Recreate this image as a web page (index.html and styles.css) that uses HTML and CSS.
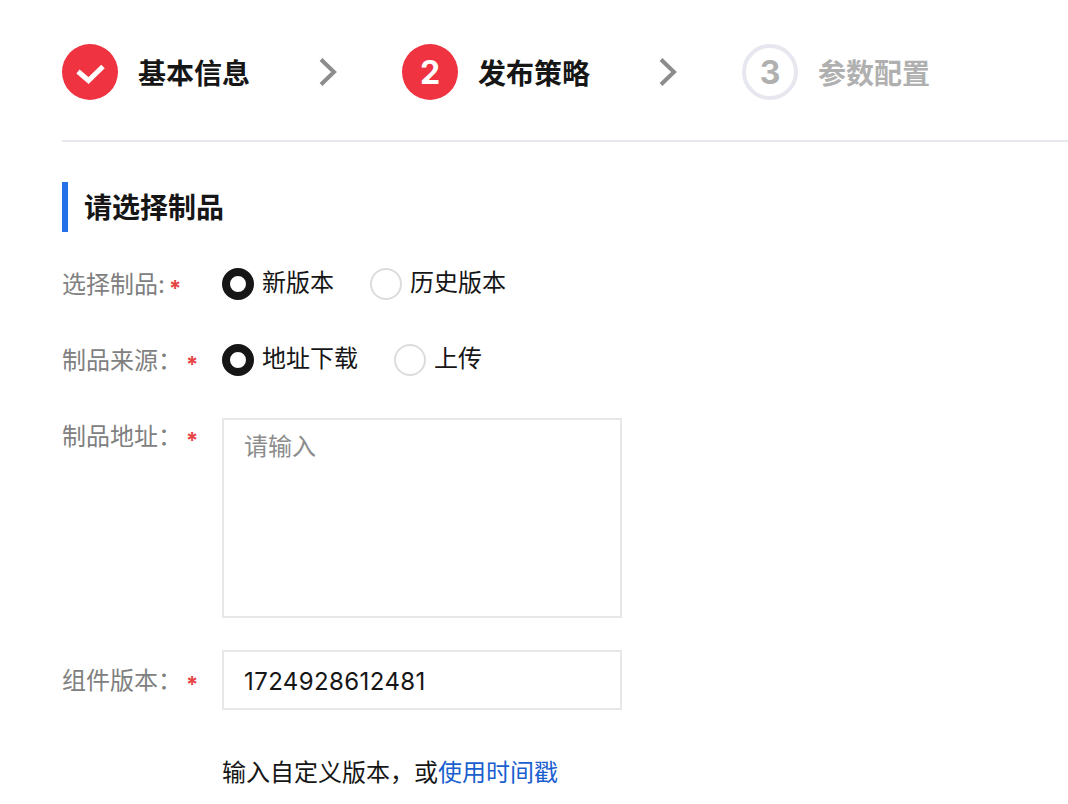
FILE: index.html
```html
<!DOCTYPE html>
<html lang="zh-CN">
<head>
<meta charset="utf-8">
<title>发布策略</title>
<link rel="stylesheet" href="styles.css">
</head>
<body>
<main class="page">
  <nav class="steps">
    <div class="step">
      <span class="badge badge-active">
        <svg class="check" viewBox="0 0 56 56" width="56" height="56"><path d="M16 27.5 L26.5 36.5 L41 22.5" fill="none" stroke="#fff" stroke-width="5"/></svg>
      </span>
      <span class="step-name">基本信息</span>
      <svg class="chevron" viewBox="0 0 18 28" width="18" height="28"><path d="M2 1.5 L15 14 L2 26.5" fill="none" stroke="#8c8c8c" stroke-width="4"/></svg>
    </div>
    <div class="step">
      <span class="badge badge-active">2</span>
      <span class="step-name">发布策略</span>
      <svg class="chevron" viewBox="0 0 18 28" width="18" height="28"><path d="M2 1.5 L15 14 L2 26.5" fill="none" stroke="#8c8c8c" stroke-width="4"/></svg>
    </div>
    <div class="step step-pending">
      <span class="badge badge-pending">3</span>
      <span class="step-name">参数配置</span>
    </div>
  </nav>

  <section class="section">
    <h2 class="section-title">请选择制品</h2>

    <div class="row row-first">
      <div class="label label-tight"><span>选择制品:</span><i class="req">*</i></div>
      <div class="radios">
        <label class="radio"><span class="dot dot-on"></span>新版本</label>
        <label class="radio"><span class="dot"></span>历史版本</label>
      </div>
    </div>

    <div class="row">
      <div class="label"><span>制品来源&#xFF1A;</span><i class="req">*</i></div>
      <div class="radios">
        <label class="radio"><span class="dot dot-on"></span>地址下载</label>
        <label class="radio"><span class="dot"></span>上传</label>
      </div>
    </div>

    <div class="row row-area">
      <div class="label"><span>制品地址&#xFF1A;</span><i class="req">*</i></div>
      <div class="area">请输入</div>
    </div>

    <div class="row row-input">
      <div class="label"><span>组件版本&#xFF1A;</span><i class="req">*</i></div>
      <div class="input">1724928612481</div>
    </div>

    <p class="hint">输入自定义版本&#xFF0C;或<a class="link" href="#">使用时间戳</a></p>
  </section>
</main>
</body>
</html>
```

FILE: styles.css
```css
* { box-sizing: border-box; }
html, body { margin: 0; height: 100%; }
body {
  background: #fff;
  color: #161616;
  font-family: Inter, "Noto Sans CJK SC", sans-serif;
  font-size: 24px;
  overflow: hidden;
}
.page { padding: 44px 0 0 62px; }
.steps {
  display: flex;
  height: 98px;
  border-bottom: 2px solid #e7e7ef;
}
.step {
  display: flex;
  flex: none;
  align-items: flex-start;
  width: 340px;
}
.badge {
  width: 56px;
  height: 56px;
  border-radius: 50%;
  display: flex;
  align-items: center;
  justify-content: center;
  font-size: 32px;
  font-weight: 700;
  flex: none;
}
.badge-active { background: #ef3340; color: #fff; }
.badge-pending { border: 4px solid #e7e7ef; color: #b0b0b0; }
.step-name {
  margin-left: 20px;
  width: 112px;
  font-size: 28px;
  line-height: 60px;
  font-weight: 700;
  color: #161616;
}
.step-pending .step-name { color: #b0b0b0; }
.chevron { margin: 14px 0 0 69px; }
.section { padding-top: 40px; }
.section-title {
  margin: 0;
  height: 50px;
  padding-left: 16px;
  border-left: 6px solid #266fe8;
  font-size: 28px;
  line-height: 52px;
  font-weight: 700;
  color: #161616;
}
.row { display: flex; align-items: flex-start; margin-top: 44px; }
.row-first { margin-top: 36px; }
.label {
  display: flex;
  width: 160px;
  height: 32px;
  padding-top: 1px;
  line-height: 32px;
  color: #808080;
}
.label span { width: 124px; }
.label-tight span { width: 107px; }
.req {
  font-style: normal;
  font-weight: 700;
  color: #e54545;
  font-size: 22px;
  line-height: 38px;
}
.radios { display: flex; gap: 36px; }
.radio { display: flex; align-items: flex-start; gap: 8px; line-height: 30px; color: #161616; }
.dot {
  width: 32px;
  height: 32px;
  border-radius: 50%;
  border: 2px solid #dcdcdc;
  background: #fff;
}
.dot-on { border: 8px solid #161616; }
.area {
  width: 400px;
  height: 200px;
  border: 2px solid #e7e7e7;
  padding: 10px 20px;
  line-height: 34px;
  color: #8c8c8c;
}
.input {
  width: 400px;
  height: 60px;
  border: 2px solid #e7e7e7;
  padding: 2px 20px 0;
  line-height: 56px;
  letter-spacing: 0.4px;
  color: #161616;
}
.row-area { margin-top: 42px; }
.row-area .label { padding-top: 3px; }
.row-input { margin-top: 32px; }
.row-input .label { padding-top: 15px; }
.hint { margin: 46px 0 0 160px; line-height: 34px; color: #161616; }
.link { color: #1a5fd0; text-decoration: none; }
```
